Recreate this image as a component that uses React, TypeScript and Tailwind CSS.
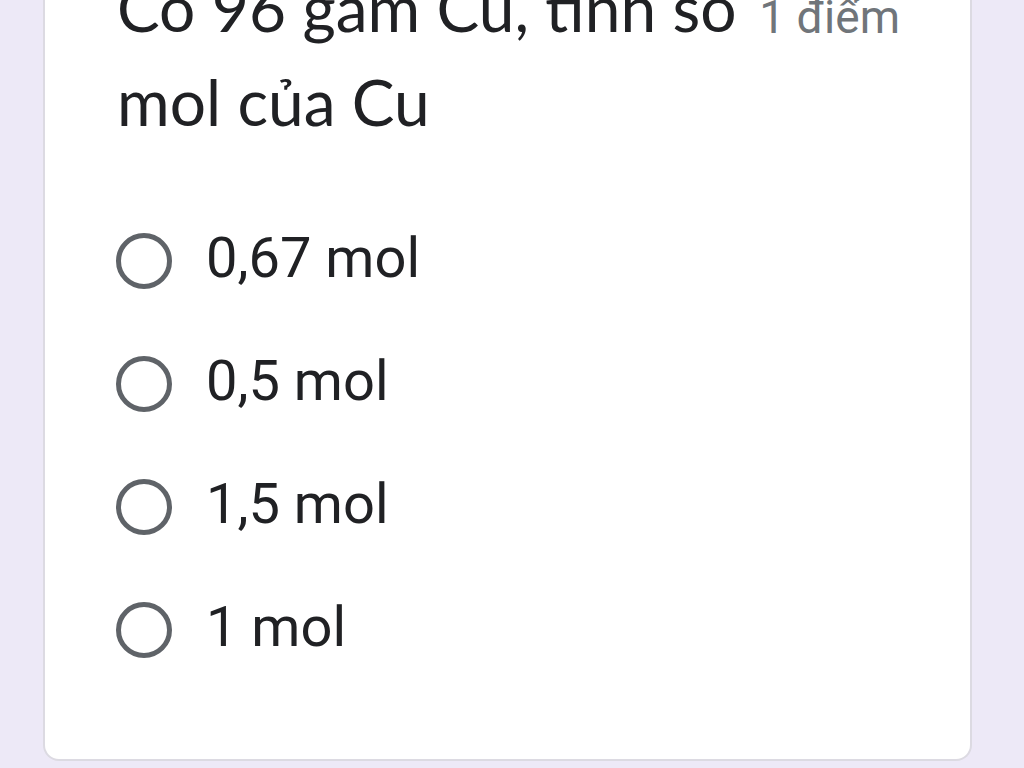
import React from 'react';

const options = ['0,67 mol', '0,5 mol', '1,5 mol', '1 mol'];

const Radio: React.FC = () => (
  <div className="w-[56px] h-[56px] shrink-0 rounded-full border-[5px] border-[#5f6368]" />
);

export default function App() {
  return (
    <div className="w-[1024px] h-[768px] overflow-hidden bg-[#ede9f7]">
      <div className="ml-[43px] w-[929px] h-[761px] flex flex-col bg-white rounded-b-[16px] border-x-2 border-b-2 border-[#dcdae2] pl-[72px] pr-[70px]">
        {/* question title */}
        <div className="-mt-[39px] flex items-start justify-between">
          <div
            className="text-[64px] leading-[94px] text-[#202124]"
            style={{ fontFamily: 'Lato, "Open Sans", sans-serif' }}
          >
            <div>Có 96 gam Cu, tính số</div>
            <div>mol của Cu</div>
          </div>
          <div
            className="text-[46px] leading-[94px] text-[#70757a] whitespace-nowrap pt-[9px]"
            style={{ fontFamily: 'Roboto, sans-serif' }}
          >
            1 điểm
          </div>
        </div>

        {/* choices */}
        <div className="mt-[50px] flex flex-col">
          {options.map((opt) => (
            <div key={opt} className="h-[123px] flex items-center gap-[34px] -ml-[1px]">
              <Radio />
              <span
                className="text-[56px] text-[#202124] leading-none pb-[6px]"
                style={{ fontFamily: 'Roboto, sans-serif' }}
              >
                {opt}
              </span>
            </div>
          ))}
        </div>
      </div>
    </div>
  );
}
